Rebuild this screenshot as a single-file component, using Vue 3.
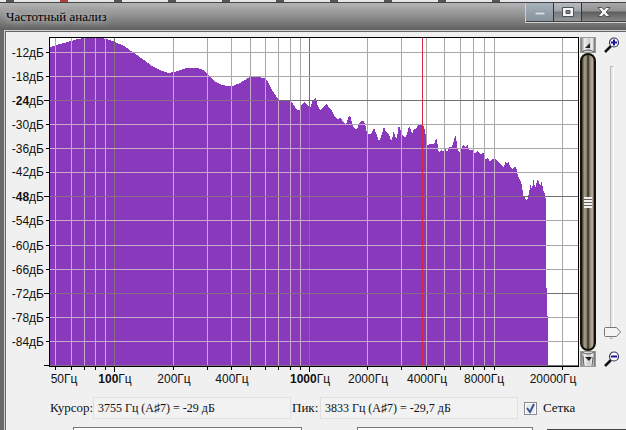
<script setup>
import { ref } from 'vue'

const W = 528
const H = 328

const columns = [
  { x: 5 }, { x: 21 }, { x: 34 }, { x: 45 }, { x: 55 }, { x: 64, major: true },
  { x: 123 }, { x: 157 }, { x: 181 }, { x: 200 }, { x: 215 }, { x: 228 }, { x: 240 }, { x: 250 },
  { x: 259, major: true }, { x: 317 }, { x: 351 }, { x: 376 }, { x: 394 }, { x: 410 },
  { x: 423 }, { x: 434 }, { x: 444 }, { x: 512 }
]

const rows = [
  { y: 14, db: 12 }, { y: 38, db: 18 }, { y: 62, db: 24, major: true }, { y: 86, db: 30 },
  { y: 110, db: 36 }, { y: 134, db: 42 }, { y: 158, db: 48, major: true }, { y: 182, db: 54 },
  { y: 207, db: 60 }, { y: 231, db: 66 }, { y: 255, db: 72, major: true }, { y: 279, db: 78 },
  { y: 303, db: 84 }, { y: 327, major: true }
]

const frequencies = [
  { hz: 50, at: 14 }, { hz: 100, at: 65, major: true }, { hz: 200, at: 124 }, { hz: 400, at: 182 },
  { hz: 1000, at: 260, major: true }, { hz: 2000, at: 318 }, { hz: 4000, at: 377 },
  { hz: 8000, at: 434 }, { hz: 20000, at: 503 }
]

const spectrum = `0,9 6,7 14,5 21,3 28,1 34,0 51,0 57,1 65,4 74,8 84,15 94,22 102,28 110,32 118,35 124,34
130,32 136,30 148,30 153,32 157,36 160,39 166,44 172,47 178,48 183,48 190,45 200,39 206,39 215,40 218,44
222,52 228,61 232,63 241,63 243,66 245,69 247,72 250,72 251,68 254,64 256,65 258,68 261,69 262,64 264,61
266,60 267,66 270,72 273,70 276,66 278,68 282,73 284,77 287,81 291,80 293,84 296,86 298,81 299,77 301,80
302,86 305,91 307,91 310,84 312,83 314,83 316,89 317,96 321,96 323,92 324,90 326,95 329,103 331,99 333,92
334,89 336,94 339,96 341,103 342,101 344,92 345,99 347,100 348,92 349,87 350,90 352,96 355,100 357,96
359,88 361,92 362,96 364,91 367,90 368,87 373,87 375,92 377,107 381,106 384,106 386,101 387,101 388,110
389,115 392,111 393,114 395,110 397,114 399,109 402,109 404,103 405,98 406,98 407,108 409,115 411,111
413,107 415,109 418,107 419,112 423,112 425,116 427,113 430,116 434,115 435,121 438,120 440,124 442,121
445,120 447,123 450,126 452,127 454,130 455,124 457,125 459,124 460,129 463,132 464,129 466,129 468,138
470,142 472,147 473,157 475,160 477,163 479,155 481,144 482,155 483,142 484,142 485,152 486,146 488,141
490,148 492,143 493,152 495,156 496,163 496,250 497,250 497,278 498,278 498,328 0,328`

const pctX = (v) => `${(v / W) * 100}%`
const pctY = (v) => `${((v + 1.5) / (H + 2)) * 100}%`

const zoom = ref(0)
const grid = ref(true)
const cursor = ref('3755 Гц (A♯7) = -29 дБ')
const peak = ref('3833 Гц (A♯7) = -29,7 дБ')
</script>

<template>
  <div class="window">
    <div class="behind" aria-hidden="true"><i></i><i class="red"></i><i></i><i></i><i></i><i></i><i></i><i></i><i></i><i></i></div>
    <header class="titlebar">
      <h1>Частотный анализ</h1>
      <div class="caption-buttons">
        <button class="min" aria-label="Свернуть">
          <svg width="12" height="12" viewBox="0 0 12 12"><rect x="1" y="6" width="10" height="3" fill="#d5dce2" stroke="#8f99a3" stroke-width="1" /></svg>
        </button>
        <button class="max" aria-label="Развернуть">
          <svg width="14" height="12" viewBox="0 0 14 12"><path fill-rule="evenodd" d="M1.5 1.5h11v9h-11zM5 4.5v3h4v-3z" fill="#f4f4f4" stroke="#4c5258" /></svg>
        </button>
        <button class="close" aria-label="Закрыть">
          <svg width="14" height="12" viewBox="0 0 14 12"><path d="M1 1.500h4l2 2.300 2-2.300h4L9.200 6l3.800 4.500H9L7 8.200 5 10.500H1L4.800 6z" fill="#f4f4f4" stroke="#50565c" /></svg>
        </button>
      </div>
    </header>

    <main class="client">
      <section class="chart">
        <svg class="y-axis" aria-hidden="true">
          <g v-for="r in rows" :key="r.y">
            <text v-if="r.db" x="38" :y="pctY(r.y)" dy="4" text-anchor="end">-<tspan :class="{ strong: r.major && r.db < 72 }">{{ r.db }}</tspan>дБ</text>
            <line :x1="r.major ? 38 : 40" x2="43" :y1="pctY(r.y)" :y2="pctY(r.y)" />
          </g>
        </svg>

        <div class="plot">
          <svg viewBox="0 0 528 328" preserveAspectRatio="none" role="img" aria-label="Частотный анализ">
            <defs>
              <clipPath id="area"><polygon :points="spectrum" /></clipPath>
            </defs>
            <g v-if="grid" class="lines">
              <rect v-for="c in columns" :key="'c' + c.x" :x="c.x" y="0" width="1" height="328" :class="{ major: c.major }" />
              <rect v-for="r in rows" :key="'r' + r.y" x="0" :y="r.y" width="528" height="1" :class="{ major: r.major }" />
            </g>
            <polygon class="area" :points="spectrum" />
            <g v-if="grid" class="lines over" clip-path="url(#area)">
              <rect v-for="c in columns" :key="'c' + c.x" :x="c.x" y="0" width="1" height="328" :class="{ major: c.major }" />
              <rect v-for="r in rows" :key="'r' + r.y" x="0" :y="r.y" width="528" height="1" :class="{ major: r.major }" />
            </g>
            <rect class="cursor" x="372" y="0" width="1" height="328" />
          </svg>
        </div>

        <div class="scrollbar">
          <button aria-label="Вверх">
            <svg width="16" height="16" viewBox="0 0 16 16"><path d="M5 11l5-5v5z" fill="#222" /><path d="M2 15q6-4 12 0" fill="none" stroke="#555" /></svg>
          </button>
          <div class="handle"><span></span></div>
          <button aria-label="Вниз">
            <svg width="16" height="16" viewBox="0 0 16 16"><path d="M2 1q6 4 12 0M4 15L3 5M12 15l1-9" fill="none" stroke="#666" /><path d="M5 6h7L9 10z" fill="#222" /></svg>
          </button>
        </div>

        <div class="zoom">
          <svg width="16" height="16" viewBox="0 0 16 16">
            <path d="M1 15l6-6" stroke="#111" stroke-width="2.500" />
            <circle cx="10" cy="5.500" r="4.500" fill="#fff" stroke="#34345c" stroke-width="1.200" />
            <path d="M7 5.500h6M10 2.500v6" stroke="#1c149c" stroke-width="2" />
          </svg>
          <div class="slider">
            <input v-model="zoom" type="range" min="0" max="100" aria-label="Масштаб" />
            <div class="track" aria-hidden="true">
              <svg :style="{ bottom: zoom + '%' }" width="20" height="12" viewBox="0 0 20 12"><path d="M3.500 1.500h11l4 4.500-4 4.500h-11q-1 0-1-1v-7q0-1 1-1z" fill="#f3f3f3" stroke="#777" /></svg>
            </div>
          </div>
          <svg width="16" height="16" viewBox="0 0 16 16">
            <path d="M1 15l6-6" stroke="#111" stroke-width="2.500" />
            <circle cx="10" cy="5.500" r="4.500" fill="#fff" stroke="#34345c" stroke-width="1.200" />
            <path d="M7 5.500h6" stroke="#1c149c" stroke-width="2" />
          </svg>
        </div>

        <svg class="x-axis" aria-hidden="true">
          <rect v-for="c in columns" :key="c.x" :x="pctX(c.x)" y="0" width="1" :height="c.major ? 5 : 3" />
          <text v-for="f in frequencies" :key="f.hz" :x="pctX(f.at)" y="16" text-anchor="middle"><tspan :class="{ strong: f.major }">{{ f.hz }}</tspan>Гц</text>
        </svg>
      </section>

      <form class="readout" @submit.prevent>
        <label for="cursor">Курсор:</label>
        <input id="cursor" v-model="cursor" type="text" readonly />
        <label for="peak" class="peak">Пик:</label>
        <input id="peak" v-model="peak" type="text" readonly />
        <label class="check">
          <span class="box">
            <input v-model="grid" type="checkbox" />
            <svg v-if="grid" width="11" height="11" viewBox="0 0 11 11"><path d="M2 5l3 4 4-8" fill="none" stroke="#3f5690" stroke-width="2" /></svg>
          </span>
          Сетка
        </label>
      </form>

      <div class="options">
        <select class="algorithm" aria-label="Алгоритм"></select>
        <select class="size" aria-label="Размер"></select>
        <button aria-label="Экспорт"></button>
      </div>
    </main>
  </div>
</template>

<style>
body {
  margin: 0;
  overflow: hidden;
}
</style>

<style scoped>
* {
  box-sizing: border-box;
}
.window {
  display: flex;
  flex-direction: column;
  height: 100vh;
  background: #686866;
  color: #111;
  font: 13px/16px "Liberation Serif", serif;
}
button {
  padding: 0;
  border: 0;
}
svg {
  display: block;
}
.behind {
  display: flex;
  gap: 46px;
  height: 2px;
  padding-left: 6px;
  overflow: hidden;
  background: #e6e6ea;
}
.behind i {
  flex: none;
  width: 8px;
  background: #55555a;
}
.behind .red {
  background: #b03c3c;
}
.titlebar {
  display: flex;
  justify-content: space-between;
  height: 28px;
  padding-left: 6px;
  border-top: 1px solid #444;
  background: linear-gradient(#b4b4b4, #929292 45%, #606060);
}
h1 {
  align-self: center;
  margin: 0;
  font-size: 13px;
  font-weight: 400;
  color: #000;
  text-shadow: 0 0 5px #bbb, 0 0 8px #bbb, 0 0 10px #aaa;
}
.caption-buttons {
  display: flex;
  height: 20px;
  border: 1px solid #d0d0d0;
  border-top: 0;
  border-right: 0;
}
.caption-buttons button {
  display: grid;
  place-items: center;
  width: 28px;
  border-right: 1px solid #333;
  border-bottom: 1px solid #444;
  background: linear-gradient(#b8bcc0, #9fa3a8 45%, #777b80 50%, #93979b);
}
.caption-buttons .min {
  background: linear-gradient(#a8b2bc, #87919b);
}
.caption-buttons .close {
  width: 44px;
  border-right: 0;
  background: linear-gradient(#a8a8a8, #929292 45%, #5d5d5d 50%, #858585);
}
.client {
  display: flex;
  flex: 1;
  flex-direction: column;
  min-height: 0;
  margin-left: 4px;
  padding: 6px 0 0 1px;
  border-top: 1px solid #d0d0d0;
  border-left: 1px solid #d0d0d0;
  background: #f0f0f0;
  box-shadow: inset 1px 1px #666;
}
.chart {
  display: grid;
  flex: 1;
  min-height: 0;
  grid-template: minmax(0, 1fr) 24px / 43px minmax(0, 1fr) 17px 30px;
}
.chart text {
  font: 12px "Liberation Sans", sans-serif;
  fill: #111;
}
.chart .strong {
  font-weight: 700;
}
.y-axis {
  width: 100%;
  height: 100%;
}
.y-axis line {
  stroke: #000;
  shape-rendering: crispEdges;
}
.plot {
  min-height: 0;
  border: 1px solid #000;
  background: #fff;
}
.plot svg {
  width: 100%;
  height: 100%;
  shape-rendering: crispEdges;
}
.area {
  fill: #8939bb;
}
.lines rect {
  fill: #a8a8a8;
}
.lines .major {
  fill: #707070;
}
.lines.over rect {
  fill: #c8a8cc;
}
.lines.over .major {
  fill: #886c84;
}
.plot .cursor {
  fill: #d82840;
}
.x-axis {
  grid-column: 2;
  width: calc(100% - 2px);
  height: 24px;
  margin-left: 1px;
  overflow: visible;
}
.scrollbar {
  display: flex;
  flex-direction: column;
  margin-left: 1px;
}
.scrollbar button {
  width: 16px;
  height: 16px;
  border: 1px solid #999;
  background: linear-gradient(90deg, #777, #eee 25%, #ccc 60%, #f4f4f4 80%, #666);
}
.scrollbar svg {
  margin: -1px;
}
.handle {
  display: grid;
  flex: 1;
  place-items: center;
  border: 2px solid #15110a;
  border-radius: 8px;
  background: linear-gradient(90deg, #3c3424, #a09888 20%, #8c8270 38%, #2c2416 50%, #756c5c 60%, #a89e8e 75%, #b4aa9a 88%, #4c4434);
}
.handle span {
  width: 8px;
  height: 11px;
  background: repeating-linear-gradient(#f0f0f0 0 2px, #665e50 2px 3px);
}
.zoom {
  display: flex;
  flex-direction: column;
  align-items: center;
  padding-left: 2px;
}
.slider {
  display: grid;
  flex: 1;
  width: 20px;
  min-height: 0;
  padding: 13px 0 12px;
}
.slider input,
.track {
  grid-area: 1 / 1;
}
.slider input {
  width: 20px;
  height: 100%;
  margin: 0;
  opacity: 0;
  writing-mode: vertical-lr;
  direction: rtl;
}
.track {
  position: relative;
  justify-self: center;
  width: 4px;
  border: 1px solid #bbb;
  border-right-color: #fff;
  background: #e8e8e8;
  pointer-events: none;
}
.track svg {
  position: absolute;
  left: -9px;
}
.readout {
  display: flex;
  align-items: center;
  height: 22px;
  margin-top: 6px;
  padding-left: 44px;
}
.readout > label:first-child {
  width: 43px;
}
.readout input[type="text"] {
  flex: 1 1 198px;
  min-width: 0;
  height: 22px;
  padding: 0 4px;
  border: 1px solid #e0e0e0;
  background: #f2f2f2;
  color: #111;
  font: inherit;
  font-size: 12px;
}
.peak {
  width: 29px;
  padding-left: 1px;
}
.check {
  display: flex;
  align-items: center;
  gap: 6px;
  width: 108px;
  padding-left: 6px;
}
.box {
  display: grid;
}
.box > * {
  grid-area: 1 / 1;
  place-self: center;
}
.box input {
  width: 13px;
  height: 13px;
  margin: 0;
  appearance: none;
  border: 1px solid #8a8a8a;
  background: #e8ecf2;
  box-shadow: inset 0 0 0 1px #fff;
}
.box svg {
  pointer-events: none;
}
.options {
  display: grid;
  grid-template-columns: 229fr 55fr 176fr 14fr 79fr;
  height: 3px;
  margin: 8px 0 0 67px;
  overflow: hidden;
}
.options > * {
  height: 22px;
  border: 1px solid #777;
  border-radius: 0;
  background: #fff;
}
.options .size {
  grid-column: 3;
}
.options button {
  grid-column: 5;
  margin-top: 2px;
  border-color: #444;
  border-right: 0;
  background: #e4e4e4;
}
</style>
